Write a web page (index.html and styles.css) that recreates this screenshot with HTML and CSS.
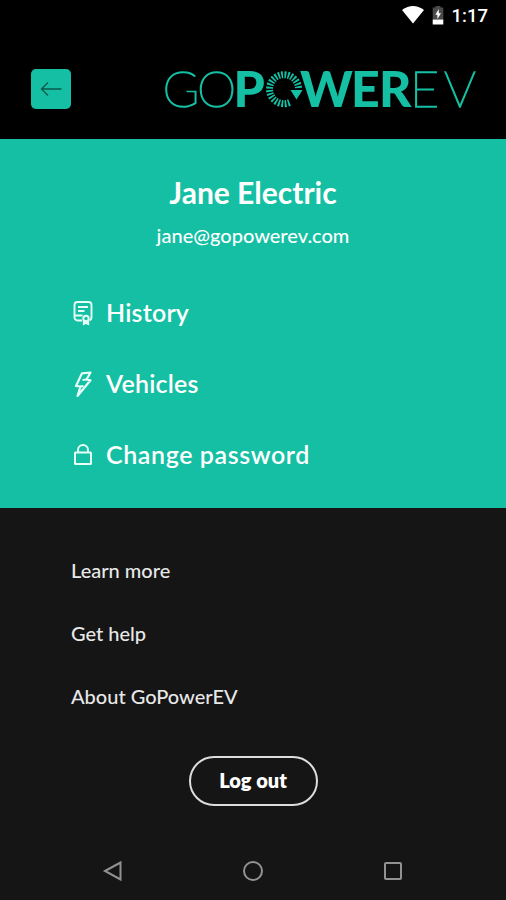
FILE: index.html
```html
<!DOCTYPE html>
<html lang="en">
<head>
  <meta charset="UTF-8">
  <meta name="viewport" content="width=device-width, initial-scale=1.0">
  <title>GoPowerEV</title>
  <link rel="stylesheet" href="styles.css">
</head>
<body>

  <!-- Status bar -->
  <div class="status-bar">
    <svg class="wifi" width="24" height="20" viewBox="0 0 24 20">
      <path d="M1 5 Q12 -3 23 5 L12 18.500 Z" fill="#fff"/>
    </svg>
    <svg class="battery" width="12" height="20" viewBox="0 0 12 20">
      <path d="M3.500 2.500 V1 H8.500 V2.500 H11.300 V14.500 H0.700 V2.500 Z" fill="#4a4a4a"/>
      <rect x="0.700" y="14.500" width="10.600" height="5" fill="#fff"/>
      <path d="M6.800 4 L3.300 9.800 H5.400 V14 L9 8.300 H6.800 Z" fill="#fff"/>
    </svg>
    <span class="time">1:17</span>
  </div>

  <!-- Header -->
  <header class="header">
    <a href="#" class="back-btn">
      <svg width="40" height="40" viewBox="0 0 40 40" fill="none" stroke="#0b5a4c" stroke-width="1.300">
        <path d="M30.500 20 H10.500 M17 13.500 L10.500 20 L17 26.500"/>
      </svg>
    </a>
    <svg class="logo" width="328" height="68" viewBox="-6 -14 328 68">
      <g class="logo-thin">
        <text x="-0.500 34" y="40">GO</text>
        <text x="247 281" y="40">EV</text>
      </g>
      <g class="logo-bold">
        <text x="70.500" y="40">P</text>
        <text x="137 188 216" y="40">WER</text>
      </g>
      <path d="M135.500 21 A14.500 14.500 0 1 0 127.600 35.100" fill="none" stroke="#14bfa3" stroke-width="7" stroke-dasharray="1.800 1.400"/>
      <path d="M127.500 23 H139.500 L133.500 32.500 Z" fill="#14bfa3"/>
    </svg>
  </header>

  <!-- Profile -->
  <section class="profile">
    <h1 class="name">Jane Electric</h1>
    <p class="email">jane@gopowerev.com</p>
    <nav class="menu">
      <a href="#" class="menu-item">
        <svg width="24" height="26" viewBox="0 0 24 26" fill="none" stroke="#e6fff9" stroke-width="1.900">
          <path d="M11 20.500 H6.500 A3 3 0 0 1 3.500 17.500 V5 A3 3 0 0 1 6.500 2 H17.500 A3 3 0 0 1 20.500 5 V17.500 Q20.500 19.500 18.500 20.300"/>
          <path d="M7 7 H17 M7 11 H13.500 M4 15.500 H11.500"/>
          <circle cx="15" cy="18.500" r="2.700"/>
          <path d="M12.800 20 V24 L15 22.800 L17.200 24 V20"/>
        </svg>
        <span>History</span>
      </a>
      <a href="#" class="menu-item">
        <svg width="24" height="26" viewBox="0 0 24 26" fill="none" stroke="#e6fff9" stroke-width="2.200" stroke-linejoin="round">
          <path d="M11 2.300 L19.500 1.500 L15.500 8.500 L19.500 9.300 L6.500 25 L9.500 15.500 L5 15 Z"/>
          <path d="M15.500 8.500 L11.500 9 M9.500 15.500 L12.500 15"/>
        </svg>
        <span>Vehicles</span>
      </a>
      <a href="#" class="menu-item password">
        <svg width="24" height="26" viewBox="0 0 24 26" fill="none" stroke="#e6fff9" stroke-width="2">
          <rect x="4" y="10.500" width="16" height="11.500" rx="0.500"/>
          <path d="M7 10.500 V8 A5 5 0 0 1 17 8 V10.500"/>
        </svg>
        <span>Change password</span>
      </a>
    </nav>
  </section>

  <!-- Links -->
  <section class="links">
    <a href="#" class="link">Learn more</a>
    <a href="#" class="link">Get help</a>
    <a href="#" class="link">About GoPowerEV</a>
    <button type="button" class="logout-btn">Log out</button>
  </section>

  <!-- Android navigation -->
  <footer class="nav-bar">
    <svg width="22" height="22" viewBox="0 0 22 22"><path d="M3 11 L18.500 2.500 V19.500 Z"/></svg>
    <svg width="22" height="22" viewBox="0 0 22 22"><circle cx="11" cy="11" r="9"/></svg>
    <svg width="22" height="22" viewBox="0 0 22 22"><rect x="3" y="3" width="16" height="16" rx="1"/></svg>
  </footer>

</body>
</html>
```

FILE: styles.css
```css
* {
  margin: 0;
  padding: 0;
  box-sizing: border-box;
}

body {
  font-family: Lato, 'Open Sans', sans-serif;
  background-color: #151515;
  color: #fff;
  height: 900px;
  display: flex;
  flex-direction: column;
  overflow: hidden;
}

a {
  color: inherit;
  text-decoration: none;
}

/* Status bar */
.status-bar {
  height: 50px;
  background: #000;
  display: flex;
  align-items: flex-start;
  justify-content: flex-end;
  padding: 5px 18px 0 0;
}

.battery {
  margin-left: 7px;
}

.time {
  font-family: Roboto, sans-serif;
  font-size: 18.500px;
  font-weight: 500;
  line-height: 23px;
  margin-left: 8px;
}

/* Header */
.header {
  height: 89px;
  background: #000;
  display: flex;
  align-items: flex-start;
  justify-content: space-between;
  padding: 19px 21px 0 31px;
}

.back-btn {
  width: 40px;
  height: 40px;
  border-radius: 5px;
  background: #14bfa3;
}

.logo {
  margin-top: -16px;
}

.logo text {
  font-size: 50px;
  fill: #14bfa3;
}

.logo-thin {
  font-weight: 100;
  stroke: #14bfa3;
  stroke-width: 1.400;
}

.logo-bold {
  font-weight: 900;
}

/* Profile */
.profile {
  height: 369px;
  background: #14bfa3;
  padding-top: 35px;
}

.name {
  font-size: 30px;
  font-weight: 700;
  line-height: 36px;
  text-align: center;
}

.email {
  font-size: 20px;
  font-weight: 500;
  line-height: 26px;
  margin-top: 12px;
  text-align: center;
}

.menu {
  display: flex;
  flex-direction: column;
  gap: 35px;
  padding: 47px 0 0 71px;
}

.menu-item {
  display: flex;
  align-items: center;
  gap: 11px;
  height: 36px;
  font-size: 25px;
  font-weight: 600;
  letter-spacing: 0.200px;
}

.menu-item span {
  padding-bottom: 2px;
}

.password {
  letter-spacing: 0.600px;
}

/* Links */
.links {
  height: 332px;
  display: flex;
  flex-direction: column;
  align-items: flex-start;
  padding: 48px 71px 0;
}

.link {
  font-size: 20px;
  font-weight: 500;
  line-height: 28px;
  margin-bottom: 35px;
  color: #e8e8e8;
}

.logout-btn {
  align-self: center;
  width: 129px;
  height: 50px;
  margin-top: 11px;
  padding-bottom: 2px;
  border: 2px solid #ddd;
  border-radius: 25px;
  background: transparent;
  color: #fff;
  font-family: inherit;
  font-size: 20px;
  font-weight: 800;
}

/* Android navigation */
.nav-bar {
  display: flex;
  justify-content: space-between;
  padding: 20px 102px 0;
}

.nav-bar svg {
  fill: none;
  stroke: #929292;
  stroke-width: 2;
}
```
